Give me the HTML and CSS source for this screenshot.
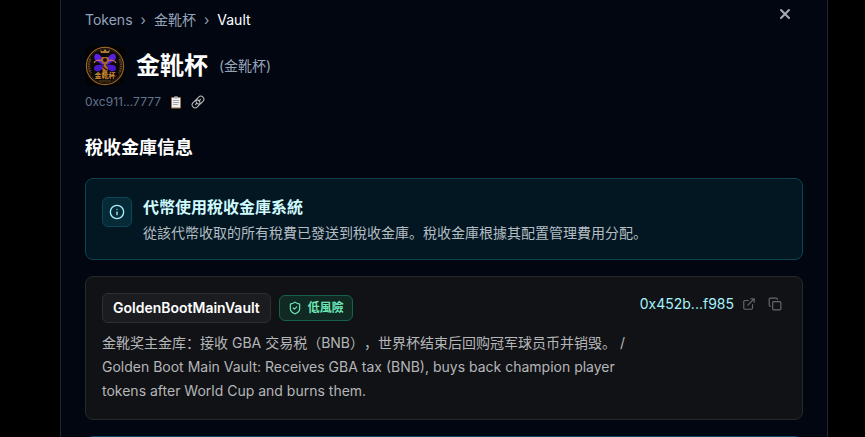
FILE: index.html
```html
<!DOCTYPE html>
<html lang="zh-Hant">
<head>
<meta charset="utf-8">
<meta name="viewport" content="width=device-width, initial-scale=1">
<title>Vault</title>
<link rel="stylesheet" href="styles.css">
</head>
<body>
<main class="panel">
  <header class="topbar">
    <nav class="crumbs" aria-label="Breadcrumb">
      <a href="#">Tokens</a><span>›</span><a href="#">金靴杯</a><span>›</span><span class="current">Vault</span>
    </nav>
    <button class="icon-btn close" type="button" aria-label="Close">
      <svg width="12" height="12" viewBox="0 0 12 12"><path d="M2 2l8 8M10 2l-8 8" stroke="currentColor" stroke-width="2" stroke-linecap="round"/></svg>
    </button>
  </header>

  <div class="token">
    <svg class="avatar" viewBox="0 0 40 40" aria-hidden="true">
      <rect width="40" height="40" fill="#030303"/>
      <circle cx="20" cy="20" r="18.6" fill="#0b0806" stroke="#94642f" stroke-width="1.2"/>
      <circle cx="20" cy="20" r="17" fill="none" stroke="#4a2e14" stroke-width=".7"/>
      <path d="M5.500 13Q2.500 20 6 27M34.500 13Q37.500 20 34 27" fill="none" stroke="#6e4f28" stroke-width="2.200" stroke-dasharray="1.300 1"/>
      <path d="M16 7l-1-3 3 1.500L20 3l2 2.500L25 4l-1 3z" fill="#b07c3a"/>
      <path d="M19 17C17 9 12 6 10 8.500c-1.500 2-1 5 1.500 6.500L18 19zM21 17c2-8 7-11 9-8.500 1.500 2 1 5-1.500 6.500L22 19z" fill="#5a20e6"/>
      <path d="M18 19c-5-1-9 0-9 3 0 4 5 4.500 8 1zM22 19c5-1 9 0 9 3 0 4-5 4.500-8 1z" fill="#4a18cc"/>
      <path d="M16.500 11h7c1 4-1 6-2.500 8l2 3-1 5h-4l-1-5 2-3c-1.500-2-3.500-4-2.500-8z" fill="#a8692a"/>
      <path d="M17 15c-4-2-7 0-8 2M23 15c4-2 7 0 8 2" fill="none" stroke="#c87050" stroke-width="1.300"/>
      <circle cx="20" cy="14" r="2" fill="#201008"/>
      <path d="M18 21l4 3" stroke="#2c1408" stroke-width="1.200"/>
      <text x="20" y="32" text-anchor="middle" class="avatar-text">金靴杯</text>
      <path d="M14 35h12" stroke="#805724" stroke-width=".8"/>
    </svg>
    <h1>金靴杯</h1>
    <span class="symbol">(金靴杯)</span>
  </div>

  <div class="address">
    <span>0xc911...7777</span>
    <button class="icon-btn" type="button" aria-label="Copy address">
      <svg width="12" height="14" viewBox="0 0 12 14"><rect x="1" y="2" width="10" height="11.500" rx="1" fill="#a3734f"/><path d="M2 3h8v9.500H2z" fill="#f0f0f0"/><path d="M4 1.500h1.200a.9.900 0 0 1 1.600 0H8v2H4z" fill="#a5acb2"/><path d="M3 5.500h6M3 7.500h6M3 9.500h5" stroke="#90979e" stroke-width=".8"/></svg>
    </button>
    <a class="icon-btn" href="#" aria-label="Open link">
      <svg width="14" height="14" viewBox="0 0 14 14" fill="none"><g transform="rotate(-45 7 7)" stroke="#c0c0c0" stroke-width="1"><rect x="0" y="4" width="8.500" height="6" rx="3"/><rect x="5.500" y="4" width="8.500" height="6" rx="3"/><path d="M3 7h2.500M8.500 7H11"/></g></svg>
    </a>
  </div>

  <h2>稅收金庫信息</h2>

  <section class="card notice">
    <span class="notice-icon">
      <svg width="16" height="16" viewBox="0 0 24 24" fill="none" stroke="currentColor" stroke-width="2" stroke-linecap="round"><circle cx="12" cy="12" r="10"/><path d="M12 16v-4M12 8h.01"/></svg>
    </span>
    <div>
      <h3>代幣使用稅收金庫系統</h3>
      <p lang="zh-Hans">從該代幣收取的所有稅費已發送到稅收金庫。稅收金庫根據其配置管理費用分配。</p>
    </div>
  </section>

  <section class="card vault">
    <div class="vault-main">
      <div class="tags">
        <span class="name">GoldenBootMainVault</span>
        <span class="risk">
          <svg width="14" height="14" viewBox="0 0 24 24" fill="none" stroke="currentColor" stroke-width="2" stroke-linecap="round" stroke-linejoin="round"><path d="M20 13c0 5-3.500 7.500-7.660 8.950a1 1 0 0 1-.67-.01C7.500 20.500 4 18 4 13V6a1 1 0 0 1 1-1c2 0 4.500-1.200 6.240-2.720a1.170 1.170 0 0 1 1.520 0C14.510 3.810 17 5 19 5a1 1 0 0 1 1 1z"/><path d="M9 12l2 2 4-4"/></svg>
          低風險
        </span>
      </div>
      <p lang="zh-Hans">金靴奖主金库：接收 GBA 交易税（BNB），世界杯结束后回购冠军球员币并销毁。 / Golden Boot Main Vault: Receives GBA tax (BNB), buys back champion player tokens after World Cup and burns them.</p>
    </div>
    <div class="contract">
      <a href="#">0x452b...f985</a>
      <a class="icon-btn" href="#" aria-label="Open in explorer">
        <svg width="14" height="14" viewBox="0 0 24 24" fill="none" stroke="currentColor" stroke-width="2" stroke-linecap="round" stroke-linejoin="round"><path d="M15 3h6v6M10 14L21 3M18 13v6a2 2 0 0 1-2 2H5a2 2 0 0 1-2-2V8a2 2 0 0 1 2-2h6"/></svg>
      </a>
      <button class="icon-btn" type="button" aria-label="Copy contract">
        <svg width="14" height="14" viewBox="0 0 24 24" fill="none" stroke="currentColor" stroke-width="2" stroke-linecap="round" stroke-linejoin="round"><rect x="8" y="8" width="14" height="14" rx="2"/><path d="M4 16a2 2 0 0 1-2-2V4a2 2 0 0 1 2-2h10a2 2 0 0 1 2 2"/></svg>
      </button>
    </div>
  </section>

  <section class="card next"></section>
</main>
</body>
</html>
```
FILE: styles.css
```css
* { box-sizing: border-box; }
html { height: 100%; overflow: hidden; }
body {
  height: 100%;
  margin: 0;
  padding: 0 37px 0 60px;
  overflow: hidden;
  background: #000;
  color: #fff;
  font-family: Inter, "Noto Sans CJK SC", "Noto Sans CJK TC", sans-serif;
  font-size: 14px;
  line-height: 20px;
  text-spacing-trim: space-all;
}
h1, h2, h3, p { margin: 0; }
a { color: inherit; text-decoration: none; }
svg { display: block; flex: none; }
.panel {
  max-width: 768px;
  min-height: 100%;
  margin: 0 auto;
  padding: 10px 24px 0;
  background: #020611;
  border: solid #23262f;
  border-width: 0 1px;
}
.icon-btn {
  display: flex;
  padding: 0;
  border: 0;
  background: none;
  color: inherit;
  cursor: pointer;
}
.topbar { display: flex; justify-content: space-between; align-items: flex-start; }
.crumbs { display: flex; gap: 8px; color: #94a3b8; }
.crumbs .current { color: #fff; }
.close { padding: 0 12px 0 0; margin-top: -2px; color: #a5abb5; }
.token { display: flex; align-items: center; gap: 11px; margin-top: 16px; }
.avatar { width: 40px; height: 40px; border-radius: 6px; }
.avatar-text { fill: #c98a34; font-size: 7px; font-weight: 700; }
h1 { font-size: 24px; line-height: 32px; font-weight: 700; }
.symbol { color: #94a3b8; }
.address {
  display: flex;
  align-items: center;
  gap: 9px;
  margin-top: 8px;
  color: #64748b;
  font-size: 12px;
  line-height: 16px;
}
h2 { margin-top: 24px; font-size: 18px; line-height: 28px; font-weight: 700; }
.card {
  display: flex;
  margin-top: 16px;
  padding: 16px;
  border: 1px solid #26282d;
  border-radius: 8px;
  background: #111216;
}
.notice { gap: 11px; background: #031722; border-color: #0b444f; }
.notice-icon {
  display: flex;
  align-items: center;
  justify-content: center;
  flex: none;
  width: 30px;
  height: 30px;
  margin-top: 2px;
  border: 1px solid #0b4754;
  border-radius: 6px;
  background: #062a36;
  color: #a5f3fc;
}
h3 { color: #cffafe; font-size: 16px; line-height: 24px; font-weight: 600; }
.notice p { margin-top: 4px; color: #b4bdc2; }
.vault { justify-content: space-between; align-items: flex-start; gap: 12px; }
.vault-main { flex: 1; min-width: 0; }
.tags { display: flex; align-items: center; gap: 8px; }
.name {
  padding: 4px 10px;
  border: 1px solid #2d2f33;
  border-radius: 6px;
  background: #1a1c20;
  font-weight: 600;
}
.risk {
  display: flex;
  align-items: center;
  gap: 6px;
  padding: 4px 8px;
  border: 1px solid #166249;
  border-radius: 6px;
  background: #102923;
  color: #6ee7b7;
  font-size: 12px;
  line-height: 16px;
  font-weight: 600;
}
.vault p { margin-top: 8px; color: #b5b6b8; line-height: 24px; }
.contract { display: flex; align-items: center; gap: 8px; color: #a5f3fc; }
.contract .icon-btn { padding: 4px 0; color: #66686c; }
.contract button.icon-btn { padding: 4px; }
.next { min-height: 82px; background: #031722; border-color: #0b4a60; }
```
